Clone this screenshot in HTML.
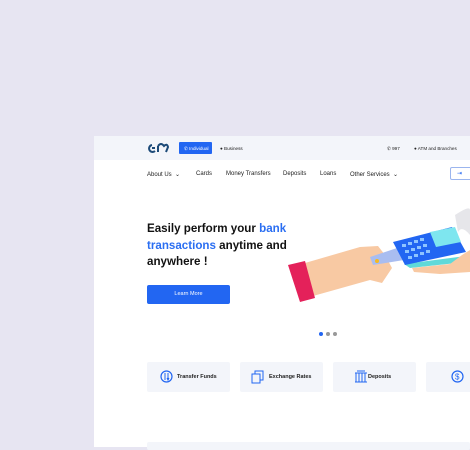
<!DOCTYPE html>
<html><head><style>
body{margin:0;width:470px;height:447px;background:#e7e5f2;position:relative;overflow:hidden;font-family:"Liberation Sans",sans-serif}
.pg{position:absolute;left:94px;top:136px;width:376px;height:311px;background:#fff}
.top{position:absolute;left:0;top:0;width:376px;height:24px;background:#f3f5fa}
.a{position:absolute;font-size:4.6px;color:#222;white-space:nowrap}
.nav{position:absolute;font-size:6px;color:#222;top:35px;white-space:nowrap}
.card{position:absolute;top:226px;width:83px;height:30px;background:#f3f5fa;border-radius:2px}
.card span{position:absolute;top:12px;font-size:5.5px;font-weight:bold;color:#222}
.dot{position:absolute;top:196px;width:4px;height:4px;border-radius:50%;background:#999}
</style></head><body>
<div class="pg">
<div class="top"></div>
<svg style="position:absolute;left:53px;top:7px" width="22" height="11" viewBox="0 0 22 11"><path d="M5 2 A3.5 3.5 0 1 0 8 8 M8 5 L5 5 M11 3 Q14 -1 17 3 Q20 0 21 4 L19 9 M11 3 L11 9" stroke="#1c4a78" stroke-width="2" fill="none"/></svg>
<div style="position:absolute;left:85px;top:6px;width:33px;height:12px;background:#2266f2;border-radius:1px"></div>
<div class="a" style="left:90px;top:10px;color:#fff">✆ Individual</div>
<div class="a" style="left:126px;top:10px">● Business</div>
<div class="a" style="left:293px;top:10px">✆ 997</div>
<div class="a" style="left:320px;top:10px">● ATM and Branches</div>
<div class="nav" style="left:53px">About Us &nbsp;⌄</div>
<div class="nav" style="left:102px">Cards</div>
<div class="nav" style="left:132px">Money Transfers</div>
<div class="nav" style="left:189px">Deposits</div>
<div class="nav" style="left:226px">Loans</div>
<div class="nav" style="left:256px">Other Services &nbsp;⌄</div>
<div style="position:absolute;left:356px;top:31px;width:24px;height:13px;border:1px solid #9bb5ee;border-radius:2px;font-size:6px;color:#2266f2;line-height:13px;padding-left:6px;box-sizing:border-box">⇥</div>
<div style="position:absolute;left:53px;top:85px;font-size:11.6px;font-weight:bold;color:#111;line-height:16.5px;width:142px">Easily perform your <span style="color:#2a6ef2">bank transactions</span> anytime and anywhere !</div>
<div style="position:absolute;left:53px;top:149px;width:83px;height:19px;background:#2266f2;border-radius:2px;color:#fff;font-size:5.5px;text-align:center;line-height:19px">Learn More</div>
<div class="dot" style="left:225px;background:#2266f2"></div><div class="dot" style="left:232px"></div><div class="dot" style="left:239px"></div>
<div class="card" style="left:53px"><span style="left:30px">Transfer Funds</span><svg style="position:absolute;left:13px;top:8px" width="13" height="13"><circle cx="6.5" cy="6.5" r="5.5" stroke="#2266f2" stroke-width="1.2" fill="none"/><path d="M5 3v7M8 3v7M7 8l1 2 1-2" stroke="#2266f2" fill="none"/></svg></div>
<div class="card" style="left:146px"><span style="left:29px">Exchange Rates</span><svg style="position:absolute;left:11px;top:8px" width="13" height="14"><rect x="4" y="1" width="8" height="9" stroke="#2266f2" fill="none"/><rect x="1" y="4" width="8" height="9" stroke="#2266f2" fill="#f3f5fa"/></svg></div>
<div class="card" style="left:239px"><span style="left:35px">Deposits</span><svg style="position:absolute;left:21px;top:8px" width="14" height="13"><path d="M1 3h12M2 3v9M5 3v9M8 3v9M11 3v9M1 12h12M3 1h8" stroke="#2266f2" fill="none"/></svg></div>
<div class="card" style="left:332px"><svg style="position:absolute;left:25px;top:8px" width="13" height="13"><circle cx="6.5" cy="6.5" r="5.5" stroke="#2266f2" stroke-width="1.2" fill="none"/><text x="4" y="9.5" font-size="8" fill="#2266f2">$</text></svg></div>
<div style="position:absolute;left:53px;top:306px;width:323px;height:8px;background:#f3f5fa;border-radius:2px"></div>
</div>
<svg style="position:absolute;left:0;top:0" width="470" height="447">
<path d="M455 215 Q470 205 470 210 L470 235 Q462 225 458 232Z" fill="#e6e6ea"/>
<path d="M305 263 L360 247 L378 246 L385 255 L392 268 L382 283 L370 280 L313 296Z" fill="#f8c9a3"/>
<path d="M288 265 L305 261 L315 298 L300 302Z" fill="#e4215a"/>
<path d="M370 257 L400 247 L404 260 L373 265Z" fill="#a9bdf0"/>
<circle cx="377" cy="261" r="2" fill="#f5b921"/>
<path d="M404 264 L466 256 L466 262 L410 268Z" fill="#5fd9d9"/>
<path d="M393 242 L452 227 L466 252 L405 265Z" fill="#2266f2"/>
<path d="M430 232 L455 227 L461 242 L436 247Z" fill="#7ee6ef"/>
<g fill="#8ec4ff"><rect x="402" y="244" width="4" height="3"/><rect x="408" y="242" width="4" height="3"/><rect x="414" y="240" width="4" height="3"/><rect x="420" y="238" width="4" height="3"/><rect x="405" y="250" width="4" height="3"/><rect x="411" y="248" width="4" height="3"/><rect x="417" y="246" width="4" height="3"/><rect x="423" y="244" width="4" height="3"/><rect x="408" y="256" width="4" height="3"/><rect x="414" y="254" width="4" height="3"/><rect x="420" y="252" width="4" height="3"/><rect x="426" y="250" width="4" height="3"/></g>
<path d="M412 268 L450 264 L462 255 L470 250 L470 272 L440 274 L414 272Z" fill="#f8c9a3"/>
</svg>
</body></html>
